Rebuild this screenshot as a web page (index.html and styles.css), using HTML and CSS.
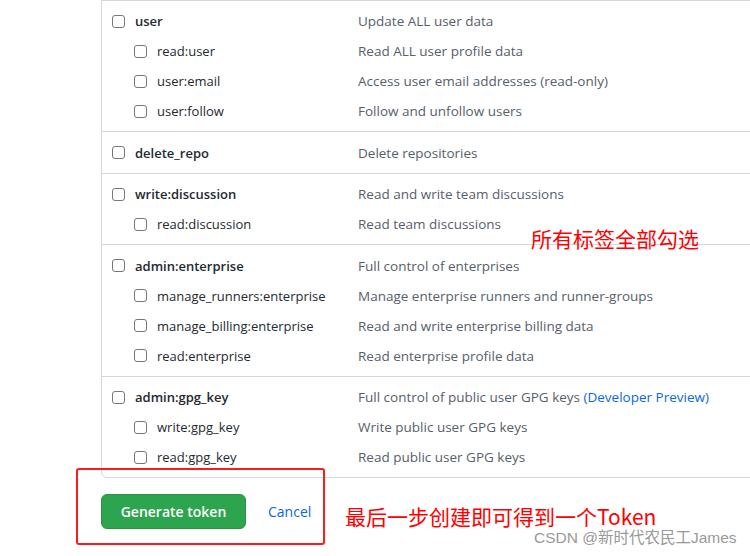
FILE: index.html
```html
<!DOCTYPE html>
<html>
<head>
<meta charset="utf-8">
<link rel="stylesheet" href="styles.css">
</head>
<body>
<div class="page">
  <div class="scopes">
    <div class="group">
      <div class="row parent"><div class="name"><span class="cb"></span>user</div><div class="desc">Update ALL user data</div></div>
      <div class="row child"><div class="name"><span class="cb"></span>read:user</div><div class="desc">Read ALL user profile data</div></div>
      <div class="row child"><div class="name"><span class="cb"></span>user:email</div><div class="desc">Access user email addresses (read-only)</div></div>
      <div class="row child"><div class="name"><span class="cb"></span>user:follow</div><div class="desc">Follow and unfollow users</div></div>
    </div>
    <div class="group">
      <div class="row parent"><div class="name"><span class="cb"></span>delete_repo</div><div class="desc">Delete repositories</div></div>
    </div>
    <div class="group">
      <div class="row parent"><div class="name"><span class="cb"></span>write:discussion</div><div class="desc">Read and write team discussions</div></div>
      <div class="row child"><div class="name"><span class="cb"></span>read:discussion</div><div class="desc">Read team discussions</div></div>
    </div>
    <div class="group">
      <div class="row parent"><div class="name"><span class="cb"></span>admin:enterprise</div><div class="desc">Full control of enterprises</div></div>
      <div class="row child"><div class="name"><span class="cb"></span>manage_runners:enterprise</div><div class="desc">Manage enterprise runners and runner-groups</div></div>
      <div class="row child"><div class="name"><span class="cb"></span>manage_billing:enterprise</div><div class="desc">Read and write enterprise billing data</div></div>
      <div class="row child"><div class="name"><span class="cb"></span>read:enterprise</div><div class="desc">Read enterprise profile data</div></div>
    </div>
    <div class="group">
      <div class="row parent"><div class="name"><span class="cb"></span>admin:gpg_key</div><div class="desc">Full control of public user GPG keys <a class="link">(Developer Preview)</a></div></div>
      <div class="row child"><div class="name"><span class="cb"></span>write:gpg_key</div><div class="desc">Write public user GPG keys</div></div>
      <div class="row child"><div class="name"><span class="cb"></span>read:gpg_key</div><div class="desc">Read public user GPG keys</div></div>
    </div>
  </div>
  <div class="actions">
    <button class="btn-primary">Generate token</button>
    <a class="cancel">Cancel</a>
  </div>
  <div class="note note-top">所有标签全部勾选</div>
  <div class="redbox"></div>
  <div class="note note-bottom">最后一步创建即可得到一个Token</div>
  <div class="watermark">CSDN @新时代农民工James</div>
</div>
</body>
</html>
```

FILE: styles.css
```css
html, body {
  margin: 0;
  padding: 0;
  overflow: hidden;
  background: #ffffff;
}
.page {
  position: relative;
  width: 750px;
  height: 556px;
  overflow: hidden;
  font-family: "Open Sans", "Noto Sans", sans-serif;
  font-size: 13px;
  color: #24292f;
}
.scopes {
  margin-left: 101px;
  width: 720px;
  border: 1px solid #d0d7de;
  border-radius: 0 0 6px 6px;
}
.group {
  padding: 5.5px 0 5px 10px;
  border-top: 1px solid #d0d7de;
}
.group:first-child {
  border-top: none;
  padding-top: 5px;
}
.row {
  display: grid;
  grid-template-columns: 246px 1fr;
  height: 30px;
  align-items: center;
}
.name {
  display: flex;
  align-items: center;
  gap: 10px;
}
.parent .name {
  font-weight: 600;
}
.child .name {
  padding-left: 22px;
}
.desc {
  color: #57606a;
  font-size: 13.5px;
}
.link {
  color: #0969da;
}
.cb {
  display: inline-block;
  width: 11px;
  height: 11px;
  border: 1px solid #767676;
  border-radius: 3px;
  background: #fff;
  flex: none;
}
.actions {
  display: flex;
  align-items: center;
  gap: 22px;
  margin: 16px 0 0 101px;
}
.btn-primary {
  width: 145px;
  height: 35px;
  background: #2da44e;
  color: #fff;
  border: 1px solid #2a9147;
  border-radius: 6px;
  font-family: "Open Sans", "Noto Sans", sans-serif;
  font-weight: 600;
  font-size: 14px;
  padding: 0;
}
.cancel {
  color: #0969da;
  font-size: 14px;
}
.note {
  position: absolute;
  color: #ff0000;
  font-family: "Noto Sans CJK SC", sans-serif;
  font-size: 21px;
  line-height: 24px;
}
.note-top {
  left: 531px;
  top: 226px;
}
.note-bottom {
  left: 345px;
  top: 504px;
}
.redbox {
  position: absolute;
  left: 76px;
  top: 468px;
  width: 245px;
  height: 73px;
  border: 2px solid #ff1a1a;
  border-radius: 3px;
}
.watermark {
  position: absolute;
  left: 534px;
  top: 529px;
  color: #999999;
  font-family: "Liberation Sans", "Noto Sans CJK SC", sans-serif;
  font-size: 15.5px;
  line-height: 18px;
}
```
